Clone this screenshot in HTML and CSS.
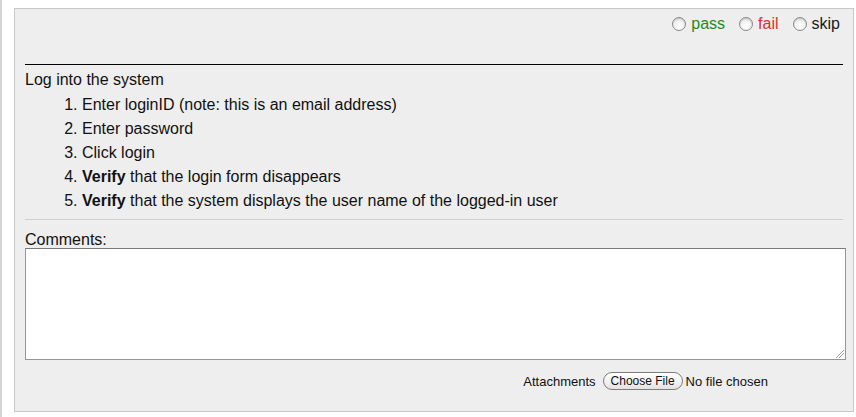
FILE: index.html
```html
<!DOCTYPE html>
<html>
<head>
<meta charset="utf-8">
<link rel="stylesheet" href="styles.css">
</head>
<body>
<div class="frame">
  <div class="panel">
    <div class="result-row">
      <label class="opt"><span class="radio"></span><span class="pass">pass</span></label>
      <label class="opt"><span class="radio"></span><span class="fail">fail</span></label>
      <label class="opt"><span class="radio"></span><span class="skip">skip</span></label>
    </div>
    <div class="rule"></div>
    <div class="steps">
      <div class="title">Log into the system</div>
      <ol class="list">
        <li>Enter loginID (note: this is an email address)</li>
        <li>Enter password</li>
        <li>Click login</li>
        <li><b>Verify</b> that the login form disappears</li>
        <li><b>Verify</b> that the system displays the user name of the logged-in user</li>
      </ol>
    </div>
    <div class="sep"></div>
    <div class="comments-label">Comments:</div>
    <div class="textarea"><span class="grip"></span></div>
    <div class="attach-row">
      <span class="attach-label">Attachments</span>
      <span class="file-btn">Choose File</span>
      <span class="file-none">No file chosen</span>
    </div>
  </div>
</div>
</body>
</html>
```

FILE: styles.css
```css
html, body {
  margin: 0;
  padding: 0;
  background: #fff;
}
body {
  font-family: "Liberation Sans", Arial, sans-serif;
  color: #111;
  width: 856px;
  height: 417px;
  overflow: hidden;
}
.frame {
  border-left: 2px solid #d4d4d4;
  height: 417px;
  padding-left: 12px;
  padding-top: 8px;
  box-sizing: border-box;
}
.panel {
  width: 840px;
  height: 404px;
  box-sizing: border-box;
  border: 1px solid #c8c8c8;
  background: #eeeeee;
  padding: 0 10px 0 10px;
}
.result-row {
  display: flex;
  justify-content: flex-end;
  align-items: center;
  height: 30px;
  padding-right: 3px;
  font-size: 16px;
}
.opt {
  display: flex;
  align-items: center;
  margin-left: 14px;
}
.opt:first-child { margin-left: 0; }
.radio {
  box-sizing: border-box;
  width: 14px;
  height: 14px;
  border-radius: 50%;
  border: 1px solid #8a8a8a;
  background: radial-gradient(circle at 50% 70%, #ffffff 0%, #f4f4f4 45%, #d0d0d0 100%);
  box-shadow: inset 0 1px 1px rgba(0,0,0,0.12);
  margin-right: 5px;
  flex: none;
}
.pass { color: #1c8c1c; }
.fail { color: #d8322a; }
.skip { color: #1a1a1a; }
.rule {
  margin-top: 25px;
  height: 1px;
  background: #000;
  width: 818px;
}
.steps {
  font-size: 16px;
  line-height: 24px;
  padding-top: 3px;
}
.list {
  margin: 1px 0 0 0;
  padding-left: 57px;
}
.list b { font-weight: bold; }
.sep {
  margin-top: 6px;
  height: 1px;
  background: #cfcfcf;
  width: 818px;
}
.comments-label {
  font-size: 16px;
  line-height: 16px;
  margin-top: 12px;
}
.textarea {
  position: relative;
  width: 821px;
  height: 112px;
  box-sizing: border-box;
  border: 1px solid #959595;
  border-top-color: #7a7a7a;
  background: #fff;
}
.grip {
  position: absolute;
  right: 1px;
  bottom: 1px;
  width: 8px;
  height: 8px;
  background: linear-gradient(135deg, transparent 0 45%, #999 45% 52%, transparent 52% 68%, #999 68% 75%, transparent 75%);
}
.attach-row {
  display: flex;
  align-items: center;
  justify-content: flex-end;
  margin-top: 12px;
  padding-right: 75px;
  font-size: 13px;
  color: #111;
}
.file-btn {
  display: inline-block;
  margin-left: 7px;
  margin-right: 3px;
  height: 18px;
  line-height: 16px;
  box-sizing: border-box;
  padding: 0 7px;
  border: 1px solid #7d7d7d;
  border-radius: 9px;
  background: linear-gradient(#ffffff, #f0f0f0 60%, #e2e2e2);
  font-size: 12px;
}
```
